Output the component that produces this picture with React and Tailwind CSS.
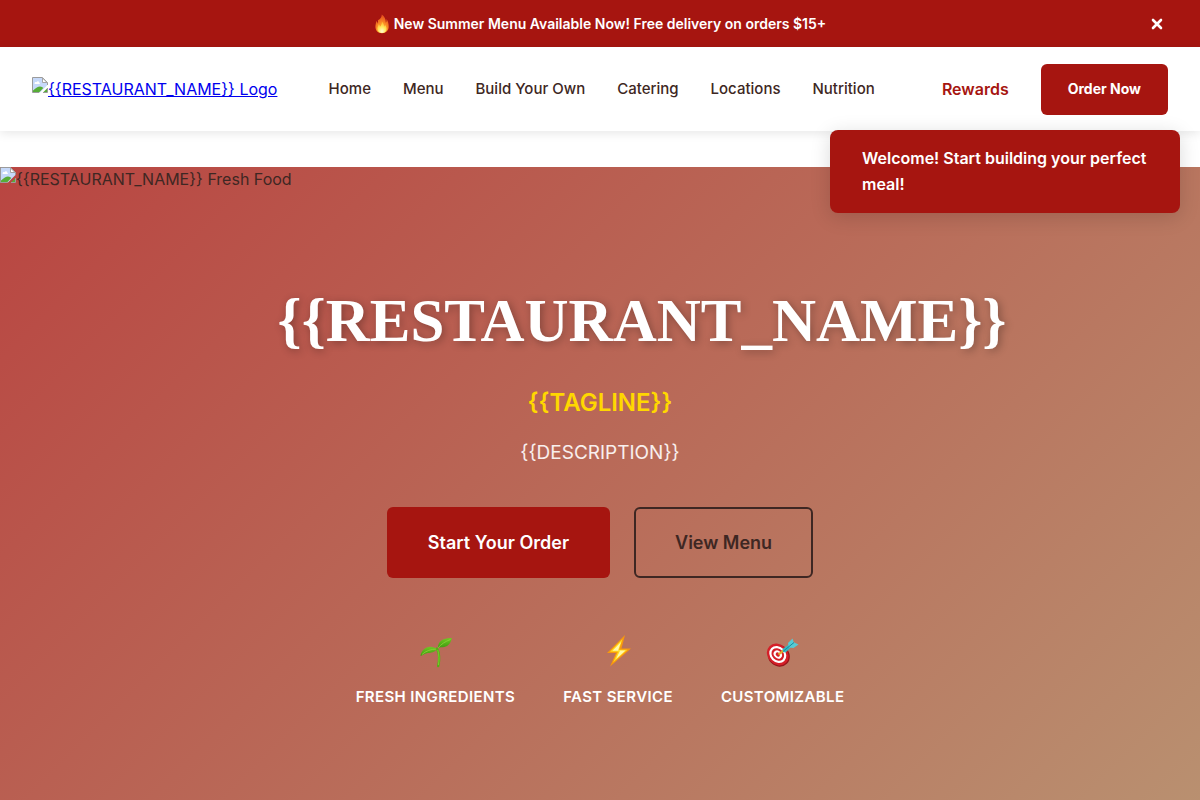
const navItems = ["Home", "Menu", "Build Your Own", "Catering", "Locations", "Nutrition"];

function MissingImageIcon() {
  return (
    <svg width="16" height="16" viewBox="0 0 16 16" className="shrink-0" aria-hidden="true">
      <path d="M.5 .5H10.5L15.5 5.5V8L8 15.5H.5Z" fill="#c6d9fa" />
      <path d="M2.500 6.500c0-1.300 1.300-1.800 2-1.200.5-1.600 2.600-1.300 2.600.2 1 0 1.200 1.500.2 1.500H3c-.3 0-.5-.2-.5-.5Z" fill="#fff" />
      <path d="M1 15.500V13.500C4 11 6 9.500 8 9.500c1.500 0 2.600.8 3.300 1.500L7 15.500Z" fill="#56ad36" />
      <path d="M15 11.500V15.500H11Z" fill="#56ad36" />
      <path d="M.5 15.500V.5H10.500L15.500 5.500V8M.5 15.500H7M15.500 11V15.500H11" fill="none" stroke="#9b9b9b" />
      <path d="M10.500 1V5.500H15Z" fill="#fff" stroke="#a5a5a5" />
    </svg>
  );
}

function FlameIcon() {
  return (
    <svg width="16" height="20" viewBox="0 0 16 20" aria-hidden="true">
      <defs>
        <radialGradient id="flame" cx=".5" cy=".85" r=".85">
          <stop offset="0" stopColor="#ffc53a" />
          <stop offset=".5" stopColor="#fb8a24" />
          <stop offset="1" stopColor="#e0461d" />
        </radialGradient>
        <radialGradient id="flameCore" cx=".5" cy=".85" r=".8">
          <stop offset="0" stopColor="#fffbd0" />
          <stop offset=".5" stopColor="#ffe75a" />
          <stop offset="1" stopColor="#ffb52e" />
        </radialGradient>
      </defs>
      <path d="M8 19.200C4 19.200 1.400 16.600 1.400 12.800c0-2.300.8-3.700.9-5.800.9.700 1.400 1.700 1.500 2.800.4-1 .3-2.300.1-3.600C6.400 5.500 7.600 3.400 7.800.6c2.600 1.700 4.100 4.600 4 8.100.7-.8.900-2.200.7-3.800 1.600 2.100 2.200 4.900 2.200 7.700 0 4-2.600 6.600-6.700 6.600Z" fill="url(#flame)" />
      <path d="M8 19c-2.800 0-4.600-1.700-4.600-4.200 0-1.900.9-3 1.300-4.600.8.600 1.200 1.500 1.200 2.500C7.400 11.300 8 9.300 7.900 7.400c1.500 1.400 2.200 3.300 2.100 5.300.6-.5.900-1.200 1-2 1 1.300 1.600 2.700 1.600 4.100C12.600 17.300 10.900 19 8 19Z" fill="url(#flameCore)" />
    </svg>
  );
}

function SeedlingIcon() {
  return (
    <svg width="40" height="40" viewBox="0 0 40 40" aria-hidden="true">
      <defs>
        <linearGradient id="leaf" x1="0" y1="0" x2="0" y2="1">
          <stop offset="0" stopColor="#70c724" />
          <stop offset="1" stopColor="#3f9a10" />
        </linearGradient>
      </defs>
      <path d="M5.500 24C6 19 10.500 14.700 15.500 14.800c2.600.1 4.700 1 6.300 2.200-2.200 3.900-5.800 3.500-8.800 4.100-3 .5-5 2-7.500 2.900Z" fill="url(#leaf)" />
      <path d="M23 16c-.2-4.500 2.300-8 6.500-9.100 2.700-.7 5-.9 7.300-.8-.7 4.600-3.500 8.200-7.500 9-2.300.4-4.300.2-6.300.9Z" fill="url(#leaf)" />
      <path d="M7 22.500c4-3.700 9-5.400 15-5.500M23 16c3-3.700 7-6.500 12.500-8.500" fill="none" stroke="#8bd43a" strokeWidth=".8" />
      <path d="M22 16.500c2.500 5 2.700 11 1.200 17.500" fill="none" stroke="#55ae16" strokeWidth="2.400" strokeLinecap="round" />
      <path d="M22.800 18c1.400 5 1.500 10 .6 15" fill="none" stroke="#83d331" strokeWidth=".8" />
    </svg>
  );
}

function BoltIcon() {
  return (
    <svg width="40" height="40" viewBox="0 0 40 40" aria-hidden="true">
      <path d="M27 3 9 21H18L12 34.500 33 16.500H23.500Z" fill="#f8980d" />
      <path d="M24.500 7 12 19.800H20L15 30.500 29.500 17.800H21Z" fill="#ffd91f" />
      <path d="M23 10 14.500 18.800H22L18 27 27.500 18.500H20Z" fill="#fff8ac" />
    </svg>
  );
}

function TargetIcon() {
  return (
    <svg width="40" height="40" viewBox="0 0 40 40" aria-hidden="true">
      <ellipse cx="15.800" cy="23.700" rx="11.500" ry="10.500" transform="rotate(45 15.800 23.700)" fill="#96141a" />
      <ellipse cx="14.800" cy="22.500" rx="11.800" ry="10" transform="rotate(45 14.800 22.500)" fill="#d51f28" />
      <ellipse cx="14.800" cy="22.500" rx="9.200" ry="7.800" transform="rotate(45 14.800 22.500)" fill="#fff" />
      <ellipse cx="14.800" cy="22.500" rx="6.900" ry="5.700" transform="rotate(45 14.800 22.500)" fill="#d51f28" />
      <ellipse cx="14.800" cy="22.500" rx="4.500" ry="3.700" transform="rotate(45 14.800 22.500)" fill="#fff" />
      <ellipse cx="14.800" cy="22.500" rx="2.300" ry="1.900" transform="rotate(45 14.800 22.500)" fill="#d51f28" />
      <path d="m15.500 22.500 5-4" stroke="#e1ad28" strokeWidth="2.200" />
      <path d="m19.500 17 5.500-4 3 .5-.5 2.500-5 4.500-2.500-.5Z" fill="#35b7c2" />
      <path d="m25.500 14-.5-3 4.500-4.500 1.300 3.700 4.700 2.300-5 3.500-4.500-.5Z" fill="#56cbd4" />
      <path d="m20.500 19 10.500-8.500" stroke="#168b9b" strokeWidth="1" />
    </svg>
  );
}

const features = [
  { label: "FRESH INGREDIENTS", Icon: SeedlingIcon },
  { label: "FAST SERVICE", Icon: BoltIcon },
  { label: "CUSTOMIZABLE", Icon: TargetIcon },
];

export default function App() {
  return (
    <div className="min-h-screen bg-white font-['Inter',sans-serif] text-base text-[#3e2723]">
      <div className="flex h-[47px] items-center bg-[#a61510] px-8 text-sm font-semibold text-white">
        <span className="w-6" />
        <p className="flex flex-1 items-center justify-center gap-1">
          <FlameIcon />
          New Summer Menu Available Now! Free delivery on orders $15+
        </p>
        <button type="button" aria-label="Close announcement" className="flex w-6 justify-center">
          <svg width="14" height="14" viewBox="0 0 14 14" aria-hidden="true">
            <path d="m4 3 8 8M12 3l-8 8" stroke="white" strokeWidth="2.600" strokeLinecap="round" />
          </svg>
        </button>
      </div>

      <header className="relative flex h-[84px] items-center justify-between bg-white px-8 shadow-[0_2px_10px_rgba(0,0,0,0.1)]">
        <a href="#home" className="flex whitespace-nowrap text-[#0000ee]">
          <MissingImageIcon />
          <span className="underline">{"{{RESTAURANT_NAME}} Logo"}</span>
        </a>
        <nav className="mr-4 flex gap-8 whitespace-nowrap text-[15px] leading-6 font-medium">
          {navItems.map((item) => (
            <a key={item} href="#menu">{item}</a>
          ))}
        </nav>
        <div className="flex items-center gap-8 whitespace-nowrap">
          <a href="#rewards" className="font-semibold text-[#a61510]">Rewards</a>
          <button type="button" className="h-[51px] rounded-md bg-[#a61510] px-[27px] text-sm font-bold text-white">Order Now</button>
        </div>
        <div role="status" className="absolute top-[83px] right-5 z-10 w-[350px] rounded-lg bg-[#a61510] px-8 pt-[15px] pb-4 leading-[26px] font-semibold text-white shadow-[0_4px_20px_rgba(0,0,0,0.15)]">
          Welcome! Start building your perfect meal!
        </div>
      </header>

      <main className="mt-9 min-h-[640px] bg-[linear-gradient(135deg,#b94541,#b99070)] pb-20">
        <div className="flex h-6 items-start">
          <MissingImageIcon />
          <span>{"{{RESTAURANT_NAME}} Fresh Food"}</span>
        </div>
        <section className="flex flex-col items-center pt-[88px] text-center">
          <h1 className="pl-[84px] font-['Liberation_Serif',serif] text-[61px] leading-[84px] font-bold whitespace-nowrap text-white [text-shadow:2px_2px_8px_rgba(0,0,0,0.3)]">
            {"{{RESTAURANT_NAME}}"}
          </h1>
          <p className="mt-5 text-2xl leading-10 font-semibold text-[#ffd700]">{"{{TAGLINE}}"}</p>
          <p className="mt-[14px] text-[19px] leading-8 text-white/90">{"{{DESCRIPTION}}"}</p>
          <div className="mt-[38px] flex gap-6 text-lg font-semibold">
            <button type="button" className="h-[71px] rounded-md bg-[#a61510] px-[41px] text-white">Start Your Order</button>
            <button type="button" className="h-[71px] rounded-md border-2 border-[#3e2723] px-[39px]">View Menu</button>
          </div>
          <ul className="mt-[54px] flex gap-12 text-[15px] font-semibold tracking-wide text-white">
            {features.map(({ label, Icon }) => (
              <li key={label} className="flex flex-col items-center gap-[13px]">
                <Icon />
                <span className="leading-6">{label}</span>
              </li>
            ))}
          </ul>
        </section>
      </main>
    </div>
  );
}
